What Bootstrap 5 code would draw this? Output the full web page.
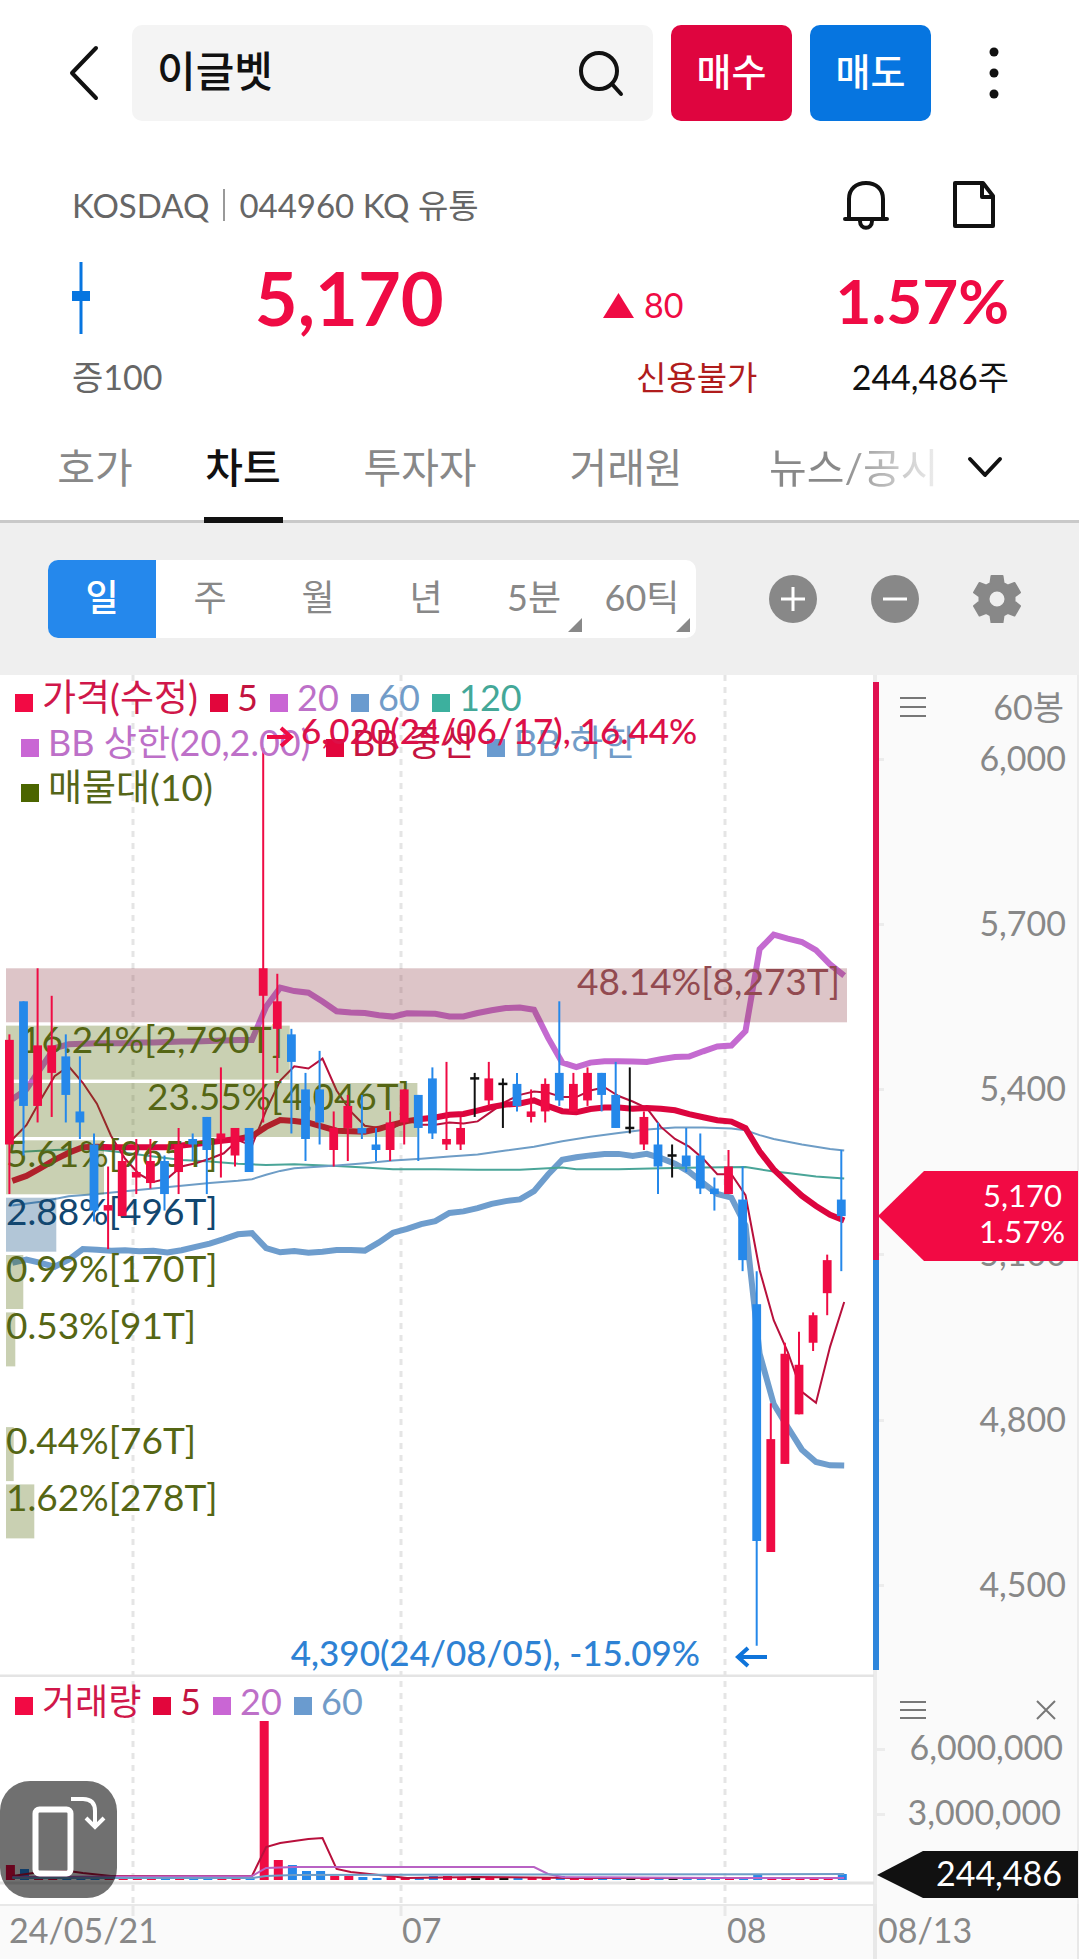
<!DOCTYPE html>
<html lang="ko">
<head>
<meta charset="utf-8">
<meta name="viewport" content="width=device-width, initial-scale=1">
<title>이글벳 차트</title>
<link href="https://cdn.jsdelivr.net/npm/bootstrap@5.3.0/dist/css/bootstrap.min.css" rel="stylesheet">
<style>
  :root {
    --up: #ef0b44;
    --down: #2588ea;
    --muted: #666;
    --tab: #888;
  }
  body { font-family: Lato, "Noto Sans CJK KR", sans-serif; background: #fff; color: #111; font-size: 34px; line-height: 40px; }
  svg { display: block; }
  .plain-btn { border: 0; background: none; padding: 0; color: inherit; }

  /* top bar */
  .topbar { padding: 25px 70px 0 68px; gap: 18px; }
  .back-btn { width: 46px; height: 96px; flex-shrink: 0; }
  .search-box { height: 96px; min-width: 0; background: #f4f4f4; border-radius: 10px; padding: 0 28px 0 25px; }
  .search-box input { width: 100%; font-size: 42px; line-height: 48px; font-weight: 500; color: #111; border: 0; background: none; outline: 0; padding: 0 0 4px; min-width: 0; }
  .trade-btn { width: 121px; height: 96px; flex-shrink: 0; border-radius: 10px; border: 0; padding: 0 0 4px; color: #fff; font-size: 38px; font-weight: 500; }
  .trade-buy { background: #df053f; }
  .trade-sell { background: #0675e0; }
  .more-btn { height: 96px; width: 60px; flex-shrink: 0; }

  /* stock summary */
  .summary { padding: 56px 70px 0 72px; }
  .meta-line { height: 56px; color: var(--muted); font-size: 33px; gap: 14px; }
  .meta-rule { width: 2px; height: 32px; background: #999; }
  .meta-tools { gap: 62px; padding-right: 13px; }
  .quote-grid { display: grid; grid-template-columns: 371fr 313fr 251fr; align-items: center; text-align: right; }
  .quote-main { height: 96px; margin-top: 17px; color: var(--up); }
  .now-price { font-size: 74px; line-height: 84px; font-weight: 700; }
  .now-rate { font-size: 62px; line-height: 72px; font-weight: 700; padding-top: 4px; }
  .now-diff { gap: 10px; padding: 14px 74px 0 0; }
  .quote-sub { height: 40px; margin-top: 11px; }
  .no-credit { color: #b01c1c; font-size: 33px; }

  /* tabs */
  .main-tabs { margin-top: 16px; padding-left: 21px; border-bottom: 3px solid #c9c9c9; height: 110px; flex-wrap: nowrap; }
  .main-tabs .nav-item { flex: 0 0 auto; width: 206px; }
  .main-tabs .tab-short { width: 148px; }
  .main-tabs .tab-last { flex: 0 0 auto; width: 208px; padding-left: 40px; overflow: hidden; }
  .main-tabs a { display: block; height: 110px; padding-top: 31px; font-size: 41px; line-height: 48px; color: var(--tab); text-decoration: none; text-align: center; white-space: nowrap; }
  .main-tabs .tab-last a { text-align: left; color: transparent; background: linear-gradient(90deg, #888 40%, #eee 100%); -webkit-background-clip: text; background-clip: text; }
  .main-tabs a.active { color: #111; font-weight: 500; }
  .main-tabs a.active::after { content: ""; display: block; width: 79px; height: 6px; margin: 25px auto 0; background: #111; }
  .tabs-more { margin-left: 30px; width: 36px; height: 110px; }

  /* period toolbar */
  .toolbar-strip { background: #efefef; height: 152px; padding: 0 58px 0 48px; }
  .period-group { width: 648px; height: 78px; background: #fff; border-radius: 10px; overflow: hidden; }
  .period-group button { flex: 1 1 0; border: 0; background: none; padding: 0 0 4px; font-size: 36px; color: #888; position: relative; }
  .period-group button.active { background: #2588ec; color: #fff; font-weight: 500; }
  .period-group .has-more::after { content: ""; position: absolute; right: 6px; bottom: 6px; border-left: 14px solid transparent; border-bottom: 14px solid #888; }
  .zoom-tools { gap: 54px; }

  /* chart */
  .panel-wrap { position: relative; }
  .panel-wrap > svg { width: 100%; height: auto; }
  svg text { font-family: Lato, "Noto Sans CJK KR", sans-serif; font-size: 34px; }
  .t-end { text-anchor: end; }
  .t-axis { fill: #888; }
  svg .t-big { font-size: 36px; }
  svg .t-profile { font-size: 37px; }
  svg .t-note { font-size: 35px; font-weight: 500; }
  svg .t-tag { font-size: 31px; fill: #fff; }
  .hot { position: absolute; }
  .hot-menu { left: 83%; top: 17px; }
  .hot-close { left: 96%; top: 21px; }
  .rotate-btn { left: 0; bottom: 6px; width: 117px; height: 117px; border-radius: 30px; background: rgba(0,0,0,.56); }
</style>
</head>
<body>
<header class="topbar d-flex align-items-center">
  <button class="plain-btn back-btn" aria-label="뒤로"><svg width="34" height="96" viewBox="0 0 34 96" fill="none" stroke="#111" stroke-width="4" stroke-linecap="round" stroke-linejoin="round"><path d="M28 23 4 48l24 25"/></svg></button>
  <div class="search-box d-flex align-items-center flex-grow-1">
    <input class="flex-grow-1" type="text" value="이글벳" aria-label="종목 검색">
    <button class="plain-btn" aria-label="검색"><svg width="48" height="48" viewBox="0 0 48 48" fill="none" stroke="#111" stroke-width="4" stroke-linecap="round"><circle cx="22" cy="22" r="18"/><path d="m35 35 9 10"/></svg></button>
  </div>
  <button class="trade-btn trade-buy">매수</button>
  <button class="trade-btn trade-sell">매도</button>
  <button class="plain-btn more-btn" aria-label="더보기"><svg class="ms-auto" width="30" height="96" viewBox="0 0 30 96" fill="#111"><circle cx="15" cy="27" r="4.500"/><circle cx="15" cy="48" r="4.500"/><circle cx="15" cy="69" r="4.500"/></svg></button>
</header>

<main>
  <section class="summary">
    <div class="meta-line d-flex align-items-center">
      <span>KOSDAQ</span><span class="meta-rule"></span><span>044960 KQ 유통</span>
      <div class="meta-tools d-flex ms-auto">
        <button class="plain-btn" aria-label="알림"><svg width="48" height="52" viewBox="0 0 48 52" fill="none" stroke="#111" stroke-width="4" stroke-linejoin="round" stroke-linecap="round"><path d="M3 40h42M7 40V20C7 10 14 4 24 4s17 6 17 16v20M18 42c0 9 12 9 12 0"/></svg></button>
        <button class="plain-btn" aria-label="메모"><svg width="44" height="52" viewBox="0 0 44 52" fill="none" stroke="#111" stroke-width="4" stroke-linejoin="round"><path d="M3 4h28l10 13v30H3zM30 4v14h11"/></svg></button>
      </div>
    </div>
    <div class="quote-grid quote-main">
      <div class="d-flex align-items-center justify-content-between">
        <svg width="18" height="72" viewBox="0 0 18 72" fill="#0675e0"><path d="M7.500 0h3v72h-3zM0 29h18v10H0z"/></svg>
        <span class="now-price">5,170</span>
      </div>
      <div class="now-diff d-flex align-items-center justify-content-end">
        <svg width="31" height="25" viewBox="0 0 31 25" fill="#ef0b44"><path d="M15.500 0 31 25H0z"/></svg><span>80</span>
      </div>
      <span class="now-rate">1.57%</span>
    </div>
    <div class="quote-grid quote-sub">
      <span class="text-start" style="color:var(--muted)">증100</span>
      <span class="no-credit">신용불가</span>
      <span>244,486주</span>
    </div>
  </section>

  <nav aria-label="종목 메뉴">
    <ul class="nav main-tabs">
      <li class="nav-item tab-short"><a href="#">호가</a></li>
      <li class="nav-item tab-short"><a href="#" class="active" aria-current="page">차트</a></li>
      <li class="nav-item"><a href="#">투자자</a></li>
      <li class="nav-item"><a href="#">거래원</a></li>
      <li class="nav-item tab-last"><a href="#">뉴스/공시</a></li>
      <li><button class="plain-btn tabs-more" aria-label="메뉴 펼치기"><svg width="36" height="24" viewBox="0 0 36 24" fill="none" stroke="#111" stroke-width="4" stroke-linecap="round" stroke-linejoin="round"><path d="m3 3 15 16L33 3"/></svg></button></li>
    </ul>
  </nav>

  <section class="toolbar-strip d-flex align-items-center justify-content-between">
    <div class="period-group d-flex" role="group" aria-label="주기">
      <button class="active">일</button><button>주</button><button>월</button><button>년</button><button class="has-more">5분</button><button class="has-more">60틱</button>
    </div>
    <div class="zoom-tools d-flex">
      <button class="plain-btn" aria-label="확대"><svg width="48" height="48" viewBox="0 0 48 48"><circle cx="24" cy="24" r="24" fill="#888"/><path d="M24 12v24M12 24h24" stroke="#fff" stroke-width="3"/></svg></button>
      <button class="plain-btn" aria-label="축소"><svg width="48" height="48" viewBox="0 0 48 48"><circle cx="24" cy="24" r="24" fill="#888"/><path d="M12 24h24" stroke="#fff" stroke-width="3"/></svg></button>
      <button class="plain-btn" aria-label="설정"><svg width="48" height="48" viewBox="0 0 48 48"><path fill="#888" stroke="#888" stroke-width="2" stroke-linejoin="round" fill-rule="evenodd" d="M18.500 1h11l1 7 4.500 2.500 6.500-2.500 5.500 9.500-5.500 4v5l5.500 4.500-5.500 9.500-6.500-2.500-4.500 2.500-1 7h-11l-1-7-4.500-2.500-6.500 2.500L1 31l5.500-4.500v-5L1 17.500 6.500 8l6.500 2.500L17.500 8zM24 15.500a8.500 8.500 0 1 0 0 17 8.500 8.500 0 0 0 0-17z"/></svg></button>
    </div>
  </section>

  <section class="panel-wrap" aria-label="가격 차트">
    <svg viewBox="0 675 1079 1002" role="img" aria-label="일봉 가격 차트">
      <path d="M873 675h206v1002H873z" fill="#fafafa"/>
      <path d="M873 675h4v1002h-4zM1077 675h2v1002h-2zM877 758h7v3h-7zM877 923h7v3h-7zM877 1088h7v3h-7zM877 1253h7v3h-7zM877 1419h7v3h-7zM877 1584h7v3h-7z" fill="#ececec"/>
      <path d="M133 675v1000M401 675v1000M725 675v1000" stroke="#e5e5e5" stroke-width="3" stroke-dasharray="6 6"/>
      <path d="M0 1676h874" stroke="#e4e4e4" stroke-width="3"/>
      <g id="price-lines" fill="none"></g>
      <g id="profile"></g>
      <g id="candles"></g>
      <path d="M873 682h6v578h-6z" fill="#e01050"/><path d="M873 1260h6v410h-6z" fill="#2e86dc"/>

      <g class="legend-price">
        <path d="M15 694h18v18H15z" fill="#f20a44"/><text class="t-profile" x="42" y="711" fill="#d0174a">가격(수정)</text>
        <path d="M210 694h18v18h-18z" fill="#e2063c"/><text class="t-big" x="237" y="711" fill="#c41440">5</text>
        <path d="M270 694h18v18h-18z" fill="#c966d4"/><text class="t-big" x="297" y="711" fill="#bd70c8">20</text>
        <path d="M351 694h18v18h-18z" fill="#6a9bcf"/><text class="t-big" x="378" y="711" fill="#729cc8">60</text>
        <path d="M432 694h18v18h-18z" fill="#3cb09e"/><text class="t-big" x="459" y="711" fill="#44a898">120</text>
        <path d="M21 739h18v18H21z" fill="#c966d4"/><text class="t-big" x="48" y="756" fill="#bd70c8">BB 상한(20,2.00)</text>
        <path d="M326 739h18v18h-18z" fill="#e2063c"/><text class="t-big" x="352" y="756" fill="#c41440">BB 중선</text>
        <path d="M487 739h18v18h-18z" fill="#6a9bcf"/><text class="t-big" x="514" y="756" fill="#729cc8">BB 하한</text>
        <path d="M21 784h18v18H21z" fill="#4b6500"/><text class="t-profile" x="48" y="801" fill="#556618">매물대(10)</text>
      </g>

      <path d="M267 737h24M281 728l10 9-10 9" fill="none" stroke="#ef0b44" stroke-width="4"/>
      <text class="t-note" x="301" y="744" fill="#dc1048">6,020(24/06/17), 16.44%</text>
      <path d="M767 1657h-29M748 1648l-10 9 10 9" fill="none" stroke="#0f74da" stroke-width="4"/>
      <text class="t-note t-end" x="700" y="1666" fill="#2e82d4">4,390(24/08/05), -15.09%</text>

      <g class="t-axis">
        <text class="t-end" x="1064" y="720">60봉</text>
        <text class="t-end" x="1066" y="771">6,000</text>
        <text class="t-end" x="1066" y="936">5,700</text>
        <text class="t-end" x="1066" y="1101">5,400</text>
        <text class="t-end" x="1066" y="1266">5,100</text>
        <text class="t-end" x="1066" y="1432">4,800</text>
        <text class="t-end" x="1066" y="1597">4,500</text>
      </g>
      <path d="M878 1216l46-45h154v90H924z" fill="#f20a44"/>
      <text class="t-tag t-end" x="1062" y="1207">5,170</text>
      <text class="t-tag t-end" x="1065" y="1243">1.57%</text>
    </svg>
    <button class="plain-btn hot hot-menu" aria-label="가격 차트 메뉴"><svg width="34" height="30" viewBox="0 0 34 30" stroke="#777" stroke-width="2"><path d="M4 6h26M4 15h26M4 24h26"/></svg></button>
  </section>

  <section class="panel-wrap" aria-label="거래량 차트">
    <svg viewBox="0 1677 1079 227" role="img" aria-label="거래량 차트">
      <path d="M873 1677h206v227H873z" fill="#fafafa"/>
      <path d="M873 1677h4v227h-4zM1077 1677h2v227h-2zM877 1748h8v3h-8zM877 1813h8v3h-8z" fill="#ececec"/>
      <path d="M133 1681v223M401 1681v223M725 1681v223" stroke="#e5e5e5" stroke-width="3" stroke-dasharray="6 6"/>
      <path d="M0 1883h874" stroke="#e4e4e4" stroke-width="3"/>
      <g id="volume-bars"></g>
      <g id="volume-lines" fill="none"></g>
      <path d="M15 1697h18v18H15z" fill="#f20a44"/><text class="t-big" x="42" y="1715" fill="#d0174a">거래량</text>
      <path d="M153 1697h18v18h-18z" fill="#e2063c"/><text class="t-big" x="180" y="1715" fill="#c41440">5</text>
      <path d="M213 1697h18v18h-18z" fill="#c966d4"/><text class="t-big" x="240" y="1715" fill="#bd70c8">20</text>
      <path d="M294 1697h18v18h-18z" fill="#6a9bcf"/><text class="t-big" x="321" y="1715" fill="#729cc8">60</text>
      <text class="t-axis t-end" x="1063" y="1760">6,000,000</text>
      <text class="t-axis t-end" x="1061" y="1825">3,000,000</text>
      <path d="M877 1875l46-24h155v47H923z" fill="#111"/>
      <text class="t-end" x="1062" y="1886" fill="#fff">244,486</text>
    </svg>
    <button class="plain-btn hot hot-menu" aria-label="거래량 차트 메뉴"><svg width="34" height="34" viewBox="0 0 34 34" stroke="#777" stroke-width="2"><path d="M4 8h26M4 16h26M4 24h26"/></svg></button>
    <button class="plain-btn hot hot-close" aria-label="거래량 닫기"><svg width="20" height="24" viewBox="0 0 20 24" stroke="#777" stroke-width="2"><path d="m1 3 18 18M19 3 1 21"/></svg></button>
    <button class="plain-btn hot rotate-btn" aria-label="화면 회전"><svg width="117" height="117" viewBox="0 0 117 117" fill="none" stroke="#fff"><rect x="35.500" y="28.500" width="35" height="64" rx="4" stroke-width="6"/><path d="M71 18h12q12 0 12 12v16M86 37l9 9 9-9" stroke-width="4"/></svg></button>
  </section>

  <section class="panel-wrap" aria-label="날짜 축">
    <svg viewBox="0 1904 1079 55">
      <path d="M0 1904h1079v55H0z" fill="#fafafa"/>
      <path d="M0 1903h873v3H0zM873 1904h4v55h-4zM1077 1904h2v55h-2zM131.500 1906h3v10h-3zM399.500 1906h3v10h-3zM723.500 1906h3v10h-3z" fill="#e8e8e8"/>
      <g class="t-axis"><text x="9" y="1943">24/05/21</text><text x="402" y="1943">07</text><text x="727" y="1943">08</text><text x="878" y="1943">08/13</text></g>
    </svg>
  </section>
</main>

<script>
  // [high, body top, body bottom, low, direction]: u = up, d = down, n = unchanged
  const days = [
    [5500,5490,5300,5210,'u'],[5560,5560,5370,5280,'d'],[5620,5480,5370,5340,'u'],[5570,5480,5430,5350,'u'],
    [5500,5460,5390,5340,'d'],[5460,5360,5340,5310,'d'],[5320,5300,5180,5160,'d'],[5260,5190,5180,5110,'u'],
    [5290,5270,5170,5170,'u'],[5310,5250,5240,5210,'u'],[5310,5270,5230,5220,'u'],[5280,5270,5210,5180,'d'],
    [5330,5300,5250,5210,'u'],[5320,5310,5300,5270,'d'],[5350,5350,5290,5210,'d'],[5440,5320,5310,5240,'u'],
    [5330,5330,5280,5260,'u'],[5330,5330,5250,5250,'d'],[6020,5620,5570,5340,'u'],[5610,5560,5510,5430,'u'],
    [5510,5500,5450,5320,'d'],[5430,5400,5310,5270,'d'],[5470,5400,5340,5300,'d'],[5360,5330,5290,5260,'u'],
    [5390,5370,5330,5270,'u'],[5390,5330,5320,5310,'d'],[5330,5300,5290,5270,'d'],[5360,5340,5290,5270,'u'],
    [5400,5400,5340,5300,'u'],[5390,5390,5330,5270,'d'],[5440,5420,5320,5310,'d'],[5450,5310,5300,5290,'u'],
    [5350,5330,5300,5290,'u'],[5430,5420,5420,5350,'n'],[5450,5420,5380,5370,'u'],[5420,5410,5410,5330,'n'],
    [5430,5410,5370,5360,'d'],[5400,5360,5350,5340,'u'],[5420,5410,5360,5340,'u'],[5560,5430,5380,5370,'d'],
    [5430,5410,5360,5360,'u'],[5440,5430,5380,5370,'u'],[5430,5430,5390,5360,'d'],[5450,5390,5330,5330,'d'],
    [5440,5330,5330,5320,'n'],[5360,5350,5300,5290,'u'],[5340,5300,5260,5210,'d'],[5300,5280,5280,5240,'n'],
    [5330,5280,5260,5250,'d'],[5320,5280,5220,5210,'d'],[5240,5220,5210,5180,'d'],[5290,5260,5210,5210,'u'],
    [5260,5200,5090,5070,'d'],[5070,5010,4580,4390,'d'],[4830,4765,4560,4560,'u'],[4940,4920,4720,4720,'u'],
    [4960,4900,4810,4810,'u'],[4995,4990,4940,4925,'u'],[5100,5090,5030,4990,'u'],[5290,5200,5170,5070,'d']
  ];
  const paint = { u: '#ef0b44', d: '#2588ea', n: '#111' };
  const step = 14.1;
  const barX = i => 9.4 + step * i;
  const lineX = i => 12.3 + step * i;
  const priceY = p => 759 + (6000 - p) * 0.5507;
  const close = days.map(d => d[4] === 'u' ? d[1] : d[2]);
  const put = (id, html) => { document.getElementById(id).innerHTML = html; };
  const poly = (pts, color, w) => `<polyline points="${pts.map(p => p[0].toFixed(1) + ',' + p[1].toFixed(1)).join(' ')}" stroke="${color}" stroke-width="${w}"/>`;

  const mean = (i, n) => close.slice(i - n + 1, i + 1).reduce((a, b) => a + b, 0) / n;
  const dev = i => { const m = mean(i, 20); return Math.sqrt(close.slice(i - 19, i + 1).reduce((a, b) => a + (b - m) ** 2, 0) / 20); };

  // values of the days whose averaging window begins before the first visible bar
  const ma5 = [5309, 5335, 5381, 5424];
  const mid = [5234, 5243, 5257, 5272, 5285, 5295, 5296, 5295, 5295, 5295, 5295, 5295, 5298, 5301, 5304, 5307, 5310, 5315, 5332];
  const top20 = [5382, 5400, 5438, 5475, 5482, 5483, 5484, 5484, 5484, 5485, 5485, 5486, 5487, 5487, 5488, 5489, 5490, 5490, 5550];
  const low20 = [5085, 5091, 5085, 5078, 5091, 5110, 5109, 5107, 5108, 5106, 5107, 5104, 5108, 5114, 5120, 5128, 5137, 5139, 5112];
  for (let i = 4; i < 60; i++) ma5.push(mean(i, 5));
  for (let i = 19; i < 60; i++) { const m = mean(i, 20), s = 2 * dev(i); mid.push(m); top20.push(m + s); low20.push(m - s); }
  const ma60 = [[0,5189],[2,5196],[4,5206],[6,5210],[8,5215],[10,5220],[12,5225],[14,5230],[16,5234],[17,5237],[18,5245],[19,5252],[20,5257],[23,5262],[25,5266],[27,5271],[29,5274],[31,5278],[33,5282],[35,5289],[37,5296],[39,5306],[41,5314],[43,5321],[45,5327],[47,5331],[49,5331],[51,5329],[52,5326],[53,5317],[54,5310],[55,5305],[56,5300],[57,5296],[58,5292],[59,5289]];
  const ma120 = [[0,5285],[1,5287],[3,5290],[5,5292],[6,5291],[8,5285],[10,5278],[12,5272],[14,5269],[16,5265],[18,5263],[20,5264],[23,5261],[25,5258],[27,5255],[30,5255],[33,5254],[36,5254],[39,5258],[40,5255],[43,5255],[46,5257],[49,5258],[52,5259],[53,5255],[54,5251],[55,5248],[57,5242],[59,5238]];
  const full = s => s.map((v, i) => [lineX(i), priceY(v)]);
  const sparse = s => s.map(([i, v]) => [lineX(i), priceY(v)]);
  put('price-lines',
    poly(full(low20), '#6e9dcd', 6) + poly(full(top20), '#c46ad0', 6) +
    poly(sparse(ma120), '#4aa598', 2) + poly(sparse(ma60), '#6e9dc6', 2) +
    poly(full(ma5), '#b8103c', 2) + poly(full(mid), '#dc053e', 6));

  // volume by price
  const bands = [[48.14,'8,273T','p'],[16.24,'2,790T','o'],[23.55,'4,046T','o'],[5.61,'965T','o'],[2.88,'496T','b'],[0.99,'170T','o'],[0.53,'91T','o'],null,[0.44,'76T','o'],[1.62,'278T','o']];
  const tint = { p: ['#90404a', '#924a50'], o: ['#4b6500', '#556614'], b: ['#00417a', '#12466f'] };
  put('profile', bands.map((b, i) => {
    if (!b) return '';
    const y = 968.3 + 57.35 * i, w = b[0] * 17.47, wide = w > 250;
    return `<rect x="6" y="${y.toFixed(1)}" width="${w.toFixed(1)}" height="54" fill="${tint[b[2]][0]}" fill-opacity=".3"/>` +
      `<text class="t-profile${wide ? ' t-end' : ''}" x="${wide ? (w - 1).toFixed(0) : 6}" y="${(y + 27).toFixed(0)}" fill="${tint[b[2]][1]}">${b[0].toFixed(2)}%[${b[1]}]</text>`;
  }).join(''));

  put('candles', days.map((d, i) => {
    const x = barX(i), c = paint[d[4]], yt = priceY(d[1]), yb = priceY(d[2]);
    const body = d[4] === 'n' ? `<path d="M${x - 4.5} ${yt}h9" stroke="${c}" stroke-width="2.500"/>` : `<rect x="${x - 4.4}" y="${yt}" width="8.800" height="${yb - yt}" fill="${c}"/>`;
    return `<path d="M${x} ${priceY(d[0])}V${priceY(d[3])}" stroke="${c}" stroke-width="2"/>${body}`;
  }).join(''));

  const floorY = 1880;
  const vol = [15,11,3,3,3,3,2,2,2,2,2,2,2,2,2,2,2,3,159,20,15,9,9,4,4,3,2,3,3,3,4,4,3,4,3,3,3,3,3,4,3,3,3,2,2,2,3,2,2,2,2,3,3,5,3,3,2,2,2,6];
  put('volume-bars', vol.map((v, i) => `<rect x="${barX(i) - 3.5}" y="${floorY - v}" width="9" height="${v}" fill="${paint[days[i][4]]}"/>`).join(''));
  const base = s => s.map(([i, h]) => [lineX(i), floorY - h]);
  put('volume-lines',
    poly(base([[0,4],[2,8],[4,9],[5,7],[7,4],[17,4],[18,33],[19,37],[20,39],[21,41],[22,42],[23,11],[24,8],[26,5],[28,2],[33,3],[40,2],[59,2]]), '#b8103c', 2) +
    poly(base([[0,3],[17,4],[18,12],[20,13],[37,13],[38,6],[39,3],[50,2],[59,2]]), '#b862c4', 2) +
    poly(base([[0,2],[17,2],[18,4],[20,5],[59,6]]), '#6e9dc6', 2));
</script>
<script src="https://cdn.jsdelivr.net/npm/bootstrap@5.3.0/dist/js/bootstrap.bundle.min.js"></script>
</body>
</html>
